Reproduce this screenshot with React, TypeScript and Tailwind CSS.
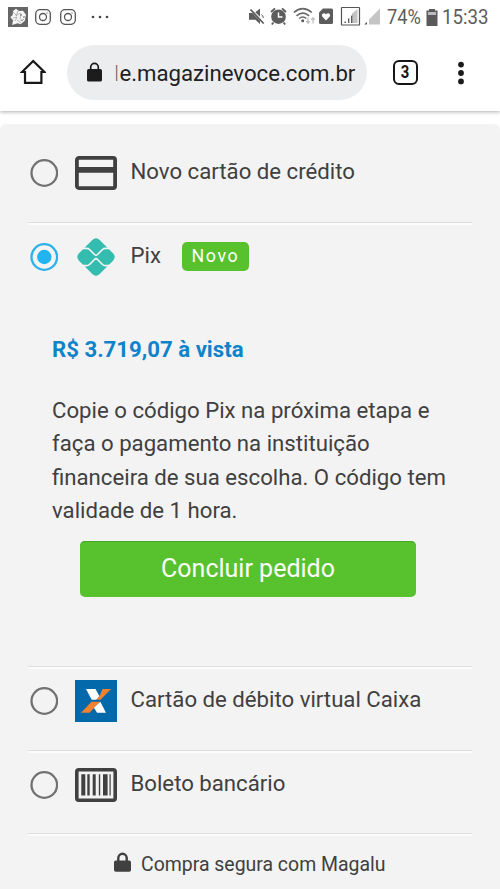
import type { ReactNode } from "react";

function InstagramGlyph() {
  return (
    <svg className="size-4 shrink-0" viewBox="0 0 16 16" fill="none" stroke="#555" strokeWidth="1.3">
      <rect x="0.7" y="0.7" width="14.6" height="14.6" rx="4.2" />
      <circle cx="8" cy="8" r="3.5" />
      <circle cx="12" cy="3.9" r="0.6" fill="#555" stroke="none" />
    </svg>
  );
}

function StatusBar() {
  return (
    <div className="flex h-[34px] items-center pl-2 text-[#5c5c5c]">
      <svg className="mr-[7px] h-5 w-5 shrink-0" viewBox="0 0 20 20">
        <rect width="20" height="20" fill="#666" />
        <path d="M5 4 8 1.7 11 4l4-.2 3 4-1.2 6-4.2 3.4-3-.9-5.5 1.8 1-4.8-2.8-3 2.4-2.2z" fill="#f5f5f5" />
        <path d="m5 5 3 3m2-4-2 5 4-3m-7 5 4-1-2 4m6-8-1 6m-3 1 4 3" fill="none" stroke="#999" strokeWidth=".7" />
        <circle cx="13" cy="8" r=".8" fill="#555" />
        <circle cx="16" cy="10" r=".8" fill="#555" />
        <path d="M12.5 13q2 1 3-.5" fill="none" stroke="#555" strokeWidth=".8" />
      </svg>
      <InstagramGlyph />
      <span className="w-[9px]" />
      <InstagramGlyph />
      <svg className="ml-[15px] h-1 w-[18px]" viewBox="0 0 18 4" fill="#444">
        <circle cx="2" cy="2" r="1.3" />
        <circle cx="9" cy="2" r="1.3" />
        <circle cx="16" cy="2" r="1.3" />
      </svg>
      <svg className="ml-[139px] h-[34px] w-[134px] shrink-0" viewBox="249 0 134 34" fill="#5c5c5c">
        <path d="M250 13h3.5l1.8 2 5.7 5.8V24l-4.6-4.2H250zM256.300 12.300 261 8.500v8.200z" />
        <path d="m251.500 9.500 13.200 14" stroke="#5c5c5c" strokeWidth="1.8" />
        <path d="M262.300 14.500q2 1 2 3.500" fill="none" stroke="#5c5c5c" strokeWidth="1" />
        <circle cx="279.500" cy="16.700" r="7.300" />
        <path d="m272 12 4-3.600m11 3.600-4-3.600M274.500 22.500l-1.700 2m11.700-2 1.700 2" stroke="#5c5c5c" strokeWidth="1.9" />
        <path d="M279.500 12.500v4.500h4" fill="none" stroke="#fff" strokeWidth="1.4" />
        <g fill="none" stroke="#666" strokeWidth="1.6">
          <path d="M294.800 12.500q9-7.600 18 0" />
          <path d="M297.500 15.800q6.300-5.300 12.600 0" />
          <path d="M300.200 18.500q3.600-3 7.200 0" />
        </g>
        <circle cx="303.700" cy="20.800" r="1.500" />
        <path d="M309 17.500v5.500m-1.700-1.800 1.700 2 1.700-2M314 23.500v-5.500m-1.700 1.800 1.700-2 1.700 2" fill="none" stroke="#bbb" strokeWidth="1.2" />
        <path d="M324 8.500h8.500q1.500 0 1.500 1.500v12.500q0 1.500-1.500 1.500h-11q-1.500 0-1.500-1.500V12.500z" />
        <path d="m327 20.500-3.800-3.900q-1.100-2 .7-3.200 1.900-.7 3.100.9 1.300-1.600 3.100-.9 1.800 1.200.7 3.200z" fill="#fff" />
        <rect x="342.500" y="7.500" width="18" height="17.500" rx=".6" fill="none" stroke="#555" strokeWidth="1.2" />
        <path d="M353 13.500 358.500 9v14H353z" fill="#c4c4c4" />
        <path d="M345.500 21.500h1.500V23h-1.500zM349 18.800l1.300-.9V23H349zM352 16l1.300-1v8H352z" />
        <path d="M370 19.500 381 8.500V24.500h-11z" fill="#c5c5c5" />
        <path d="m365.200 24.500 2.800-2.800v2.800z" />
      </svg>
      <span className="ml-[5px] mt-px w-[34px] origin-left scale-x-[.89] text-[20.500px] leading-none whitespace-nowrap">74%</span>
      <svg className="ml-[5px] h-[17px] w-3 shrink-0" viewBox="0 0 12 17">
        <path d="M3 1.500V0h6v1.500h2.500V17H.5V1.500z" fill="#5a5a5a" />
        <path d="M2 3h8v3H2z" fill="#bbb" />
      </svg>
      <span className="ml-[4px] mt-px origin-left scale-x-[.91] text-[20.500px] leading-none">15:33</span>
    </div>
  );
}

function BrowserBar() {
  return (
    <div className="flex h-[77px] items-center">
      <svg className="ml-5 -mt-[3px] h-7 w-[26px] shrink-0" viewBox="0 0 26 28" fill="none" stroke="#181818" strokeWidth="2.2">
        <path d="M2 15h3v10.800h16.400V15h3L13.200 4z" />
      </svg>
      <div className="ml-[21px] flex h-[55px] w-[300px] shrink-0 items-center rounded-full bg-[#ecedef] pl-5">
        <svg className="-mt-[2px] h-5 w-[15px] shrink-0" viewBox="0 0 15 20">
          <path d="M3.700 8V5.200a3.800 3.800 0 0 1 7.600 0V8" fill="none" stroke="#1c1c1c" strokeWidth="1.700" />
          <rect y="7" width="15" height="12.600" rx="1.700" fill="#1c1c1c" />
        </svg>
        <span className="ml-[12px] text-[22.200px] leading-[30px] whitespace-nowrap text-[#202124]">
          <span className="inline-block origin-center scale-x-50 text-[#5c5d5f]">l</span>e.magazinevoce.com.br
        </span>
      </div>
      <div className="ml-[26px] flex size-[25px] shrink-0 items-center justify-center rounded-[6px] border-[2.500px] border-[#161616] text-[#161616]">
        <span className="mt-px scale-x-[.85] text-[17.500px] leading-none font-bold">3</span>
      </div>
      <svg className="ml-[39px] h-6 w-2 shrink-0" viewBox="0 0 8 24" fill="#1b1b1b">
        <circle cx="4" cy="3.600" r="2.900" />
        <circle cx="4" cy="12" r="2.900" />
        <circle cx="4" cy="20.400" r="2.900" />
      </svg>
    </div>
  );
}

function Radio({ checked = false }: { checked?: boolean }) {
  return (
    <svg className="size-7 shrink-0" viewBox="0 0 28 28">
      <circle cx="14.300" cy="14" r="12.800" fill="none" stroke={checked ? "#2cb1ea" : "#717171"} strokeWidth="2.300" />
      {checked && <circle cx="14.300" cy="14" r="7.200" fill="#22b4f1" />}
    </svg>
  );
}

function Option({ icon, label, checked, children }: { icon: ReactNode; label: string; checked?: boolean; children?: ReactNode }) {
  return (
    <div className="flex h-[63px] items-center pl-[2px]">
      <Radio checked={checked} />
      <span className="ml-[17px] flex w-[42px] shrink-0 justify-center">{icon}</span>
      <span className="-mt-[3px] ml-[13.500px] text-[22.200px] leading-none whitespace-nowrap">{label}</span>
      {children}
    </div>
  );
}

function CardIcon() {
  return (
    <svg className="h-[34px] w-[42px]" viewBox="0 0 42 34">
      <rect x="1.900" y="1.900" width="38.200" height="30.200" rx="2" fill="none" stroke="#404040" strokeWidth="3.800" />
      <path d="M2 11h38v5.700H2z" fill="#404040" />
    </svg>
  );
}

function PixIcon() {
  return (
    <svg className="h-[38px] w-[38px]" viewBox="0 0 38 38">
      <path
        d="M15.300 2Q19-1.400 22.700 2L36 15.300Q39.400 19 36 22.700L22.700 36Q19 39.400 15.300 36L2 22.700Q-1.400 19 2 15.300z"
        fill="#34bcae"
      />
      <path
        d="M5 10.300h4.500q1.800 0 3 1.200l5 5q1.500 1.500 3 0l5-5q1.200-1.200 3-1.200H33M5 27.700h4.500q1.800 0 3-1.200l5-5q1.500-1.500 3 0l5 5q1.200 1.200 3 1.200H33"
        fill="none"
        stroke="#f3f3f3"
        strokeWidth="1.700"
      />
    </svg>
  );
}

function CaixaIcon() {
  return (
    <svg className="h-[42px] w-[42px]" viewBox="0 0 42 42">
      <rect width="42" height="42" fill="#0469aa" />
      <path d="M11 9h9.500l4 7.200-3.300 3.600h-4.500z" fill="#fff" />
      <path d="M27.500 9H36L25.500 19.800h-4.300l3.300-3.600z" fill="#f4812d" />
      <path d="M16.500 21.800h8.500L14.500 32.700H6z" fill="#f4812d" />
      <path d="m25.300 21.800 5.700 10.900h-9L19 27.800z" fill="#fff" />
    </svg>
  );
}

function BarcodeIcon() {
  return (
    <svg className="h-[34px] w-[42px]" viewBox="0 0 42 34">
      <rect x="1.800" y="1.800" width="38.400" height="30.400" rx="2" fill="none" stroke="#404040" strokeWidth="3.600" />
      <path
        d="M6.300 6.300h4V27.500h-4zM12.300 6.300h2.400V27.500h-2.400zM17.700 6.300h3V27.500h-3zM23.800 6.300h1.400V27.500h-1.400zM28 6.300h4.600V27.500H28zM34.500 6.300h1.200V27.500h-1.200z"
        fill="#404040"
      />
    </svg>
  );
}

function Divider() {
  return <div className="h-[3px] border-t border-[#dedede] bg-[#fbfbfb]" />;
}

export default function App() {
  return (
    <div className="h-[889px] w-[500px] overflow-hidden bg-white font-[Roboto,sans-serif] text-[#404040]">
      <header className="h-[111px] bg-white shadow-[0_1px_4px_rgba(0,0,0,0.32)]">
        <StatusBar />
        <BrowserBar />
      </header>
      <main className="mt-[13px] h-[765px] rounded-t-[6px] bg-[#f3f3f3] px-7 pt-[17px]">
        <div className="h-[81px]">
          <Option icon={<CardIcon />} label="Novo cartão de crédito" />
        </div>
        <Divider />
        <section className="h-[441px]">
          <Option icon={<PixIcon />} label="Pix" checked>
            <span className="ml-[21px] flex h-[29px] w-[67px] items-center justify-center rounded-[5px] bg-[#57c22d] text-[17.800px] tracking-[1.600px] text-white">
              Novo
            </span>
          </Option>
          <div className="px-6 pt-[45px]">
            <p className="text-[22.200px] leading-[33px] font-bold text-[#0f83ca]">R$ 3.719,07 à vista</p>
            <p className="mt-[28px] text-[22.200px] leading-[33.300px] whitespace-nowrap">
              Copie o código Pix na próxima etapa e<br />
              faça o pagamento na instituição
              <br />
              financeira de sua escolha. O código tem
              <br />
              validade de 1 hora.
            </p>
            <button className="mt-[14px] ml-7 block h-[56px] w-[336px] rounded-[5px] bg-[#57c22d] text-[25px] text-[#fbfff8] shadow-[inset_0_1px_0_#4aa62a]">
              Concluir pedido
            </button>
          </div>
        </section>
        <Divider />
        <div className="h-[81px]">
          <Option icon={<CaixaIcon />} label="Cartão de débito virtual Caixa" />
        </div>
        <Divider />
        <div className="h-[80px]">
          <Option icon={<BarcodeIcon />} label="Boleto bancário" />
        </div>
        <Divider />
        <footer className="flex h-[57px] items-center pl-[86px]">
          <svg className="-mt-[6px] h-5 w-[17px] shrink-0" viewBox="0 0 17 20">
            <path d="M4.300 10V6a4.200 4.200 0 0 1 8.400 0v4" fill="none" stroke="#404040" strokeWidth="2.400" />
            <rect y="8.500" width="17" height="11.300" rx="1.800" fill="#404040" />
          </svg>
          <span className="ml-[10px] text-[19.450px] leading-none whitespace-nowrap">Compra segura com Magalu</span>
        </footer>
      </main>
    </div>
  );
}
